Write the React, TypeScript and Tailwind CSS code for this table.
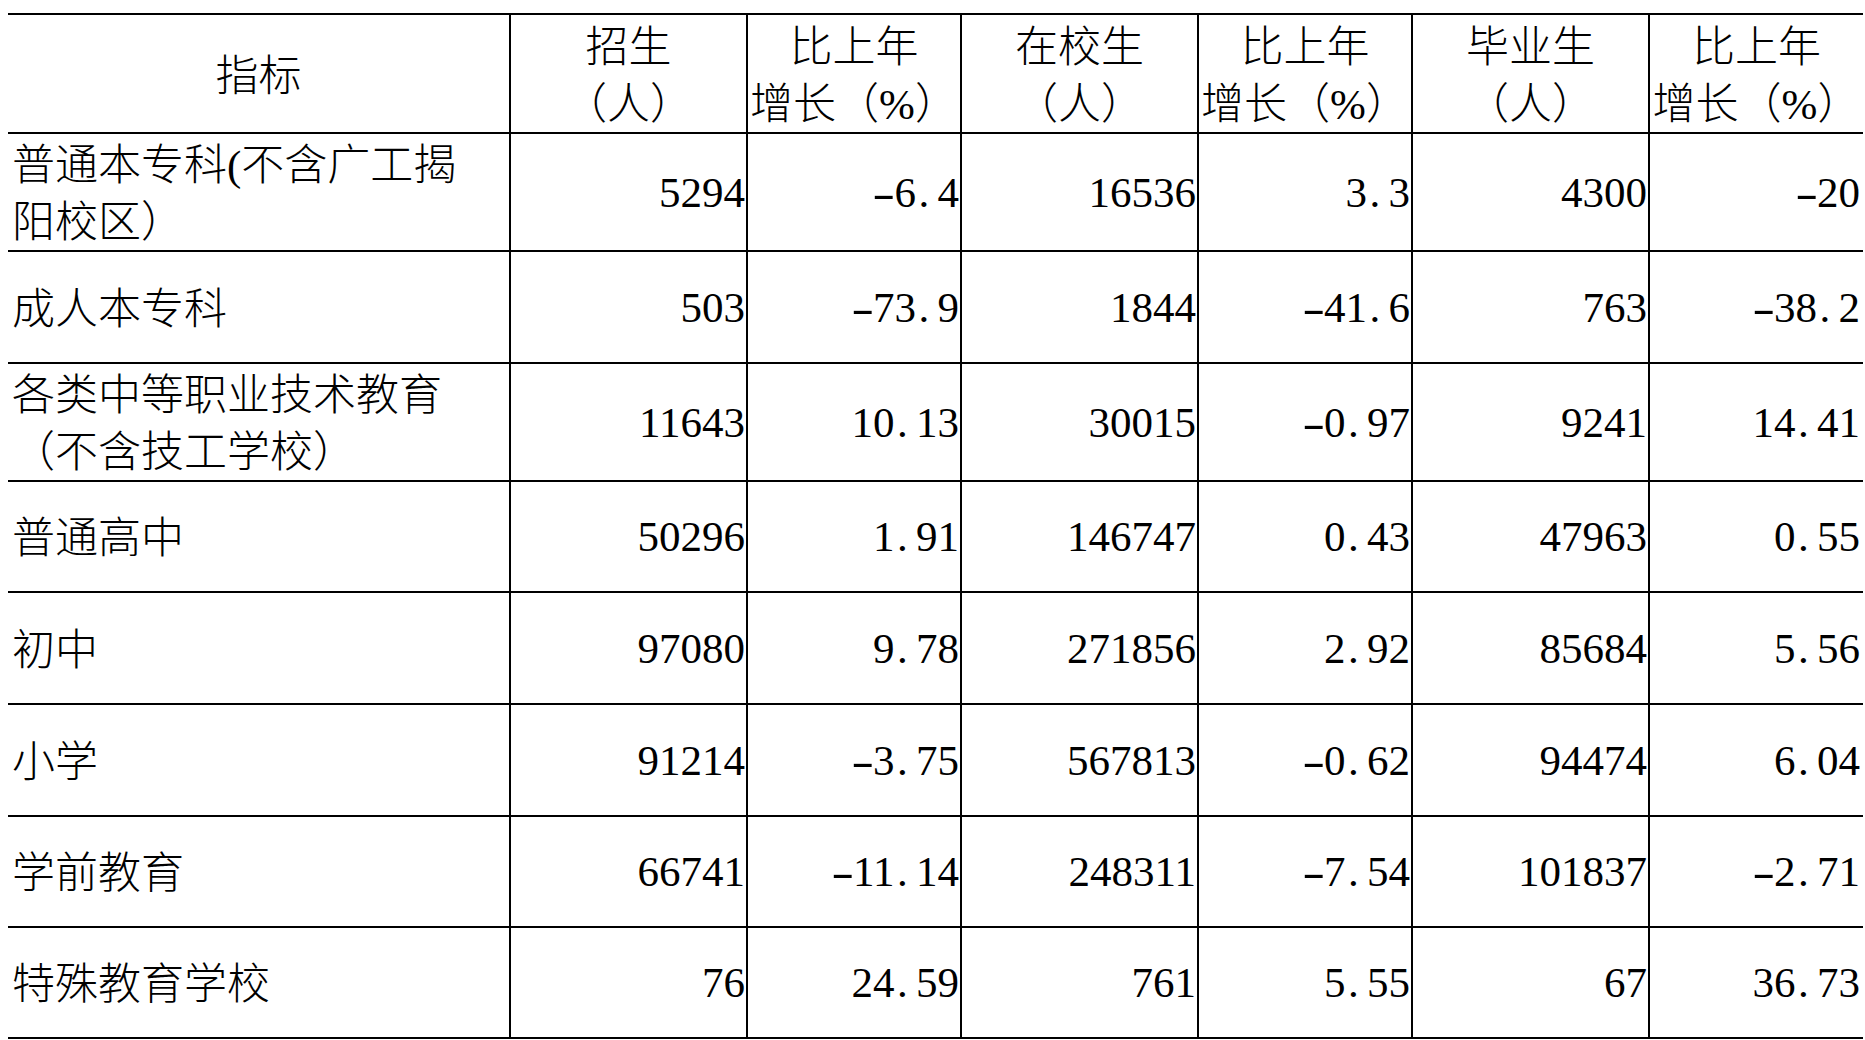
import React from "react";

type Row = { label: React.ReactNode; h: string; vals: string[] };

const widths = ["w-[501px]", "w-[237px]", "w-[214px]", "w-[237px]", "w-[214px]", "w-[237px]", "w-[215px]"];

const rows: Row[] = [
  { label: <>普通本专科(不含广工揭<br />阳校区）</>, h: "h-[118px]", vals: ["5294", "-6.4", "16536", "3.3", "4300", "-20"] },
  { label: "成人本专科", h: "h-[112px]", vals: ["503", "-73.9", "1844", "-41.6", "763", "-38.2"] },
  { label: <>各类中等职业技术教育<br />（不含技工学校）</>, h: "h-[118px]", vals: ["11643", "10.13", "30015", "-0.97", "9241", "14.41"] },
  { label: "普通高中", h: "h-[111px]", vals: ["50296", "1.91", "146747", "0.43", "47963", "0.55"] },
  { label: "初中", h: "h-[112px]", vals: ["97080", "9.78", "271856", "2.92", "85684", "5.56"] },
  { label: "小学", h: "h-[112px]", vals: ["91214", "-3.75", "567813", "-0.62", "94474", "6.04"] },
  { label: "学前教育", h: "h-[111px]", vals: ["66741", "-11.14", "248311", "-7.54", "101837", "-2.71"] },
  { label: "特殊教育学校", h: "h-[111px]", vals: ["76", "24.59", "761", "5.55", "67", "36.73"] },
];

const headers: [string, string][] = [
  ["招生", "（人）"],
  ["比上年", "增长（%）"],
  ["在校生", "（人）"],
  ["比上年", "增长（%）"],
  ["毕业生", "（人）"],
  ["比上年", "增长（%）"],
];

function Num({ v }: { v: string }) {
  return (
    <span className="whitespace-nowrap">
      {v.split("").map((c, i) => {
        if (c === ".")
          return (
            <span key={i} className="inline-block w-[0.5em] pl-[0.06em] text-left">
              .
            </span>
          );
        if (c === "-")
          return (
            <span key={i} className="inline-block w-[0.5em] text-center scale-x-[1.6]">
              -
            </span>
          );
        return <span key={i}>{c}</span>;
      })}
    </span>
  );
}

export default function App() {
  return (
    <div
      className="w-[1865px] h-[1040px] bg-white text-black overflow-hidden font-light"
      style={{ fontFamily: '"Liberation Serif", "Noto Sans CJK SC", serif' }}
    >
      <div className="ml-[8px] mt-[13px] w-[1855px] border-t-2 border-black text-[43px] leading-[57px]">
        {/* header */}
        <div className="flex h-[119px]">
          <div className={`${widths[0]} shrink-0 border-b-2 border-black flex items-center justify-center pt-[5px]`}>
            指标
          </div>
          {headers.map((hd, i) => (
            <div
              key={i}
              className={`${widths[i + 1]} shrink-0 border-b-2 border-l-2 border-black flex flex-col items-center justify-center text-center whitespace-nowrap pt-[5px]`}
            >
              <div>{hd[0]}</div>
              <div>{hd[1]}</div>
            </div>
          ))}
        </div>
        {rows.map((r, ri) => (
          <div key={ri} className={`flex ${r.h}`}>
            <div className={`${widths[0]} shrink-0 border-b-2 border-black flex items-center pl-[4px] pt-[4px]`}>
              <div>{r.label}</div>
            </div>
            {r.vals.map((v, i) => (
              <div
                key={i}
                className={`${widths[i + 1]} shrink-0 border-b-2 border-l-2 border-black flex items-center justify-end ${i === 5 ? "pr-[3px]" : "pr-[1px]"}`}
              >
                <Num v={v} />
              </div>
            ))}
          </div>
        ))}
      </div>
    </div>
  );
}
